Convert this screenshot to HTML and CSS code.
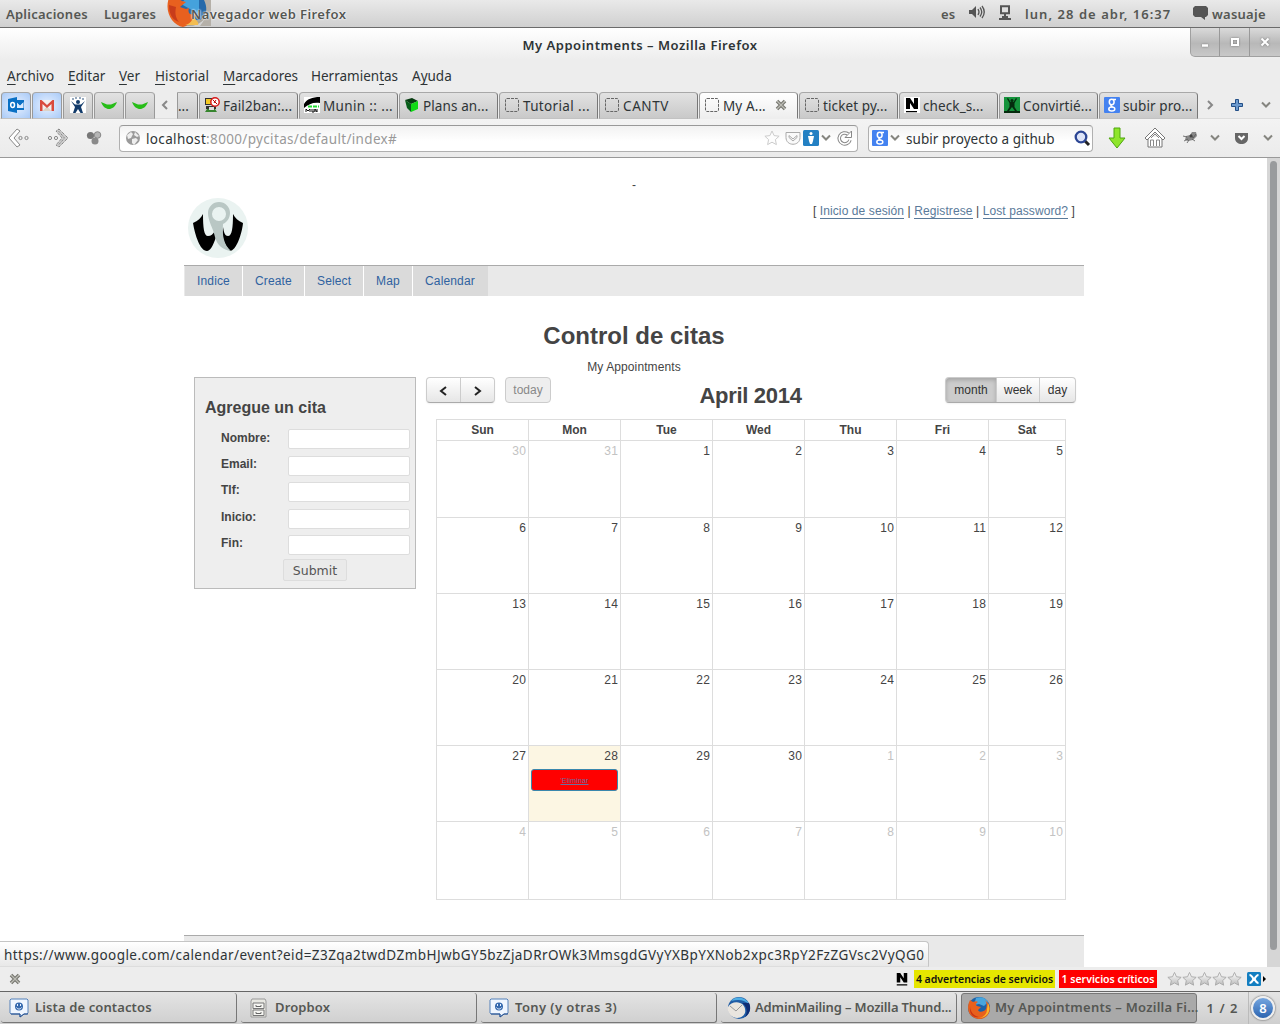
FILE: index.html
```html
<!DOCTYPE html>
<html lang="es">
<head>
<meta charset="utf-8">
<title>My Appointments</title>
<link rel="stylesheet" href="styles.css">
</head>
<body>
<svg width="0" height="0" class="defs">
  <defs>
    <linearGradient id="gy" x1="0" y1="0" x2="0" y2="1"><stop offset="0" stop-color="#fff"/><stop offset="1" stop-color="#bbb"/></linearGradient>
    <symbol id="fox" viewBox="0 0 24 24">
      <circle cx="12" cy="12" r="11" fill="#1c62a8"/><path d="M9 2c5-2 10 0 12 4l-4 4-5-2-5 1z" fill="#48a5dd"/>
      <path d="M3 4l3 2c2-1 4-1 5 0-2 1-3 3-1 4l4 1-3 3c1 3 6 2 8-1 1-3 1-6-1-9 5 4 6 9 4 13-3 6-10 8-16 4C0 17 0 10 3 4z" fill="#e8601c"/>
      <path d="M21 7c4 8-1 15-9 15 5-1 8-4 8-9z" fill="#f9b62c"/><path d="M3 10c0 6 4 10 9 11-6 1-10-3-9-11z" fill="#c93312"/>
    </symbol>
    <symbol id="blank" viewBox="0 0 16 16"><rect x="1.5" y="1.5" width="13" height="13" rx="1.5" fill="none" stroke="#666" stroke-dasharray="3 1"/></symbol>
    <symbol id="goog" viewBox="0 0 16 16"><rect width="16" height="16" rx="1" fill="#4482f0"/><g fill="none" stroke="#fff" stroke-width="1.5"><ellipse cx="7.7" cy="5" rx="2.4" ry="2.7"/><path d="M9 2.6h3M8 7.7c-2 1-1 1.700.6 2.400"/><ellipse cx="7.8" cy="12" rx="3" ry="2"/></g></symbol>
    <symbol id="nag" viewBox="0 0 16 16"><rect width="16" height="16" fill="#fff"/><path d="M2 12V1h4l4 6V1h4v11h-4L6 6v6zM2 14h11v1.3H2z" fill="#000"/></symbol>
    <symbol id="down" viewBox="0 0 10 8"><path d="M1 1.500l4 4 4-4" fill="none" stroke="#85857f" stroke-width="2"/></symbol>
    <symbol id="chat" viewBox="0 0 20 20"><path d="M2 1h16l1 1v13l-1 1h-3l-4 3v-3H2l-1-1V2z" fill="#eff6ff" stroke="#5581ba"/><path d="M2 16h9v3l4-3h4" fill="none" stroke="#254f8e"/><circle cx="10" cy="8.500" r="4" fill="#3569ae"/><path d="M8.500 6v2M11.500 6v2M7.500 9.500c1 2 4 2 5 0" stroke="#e8f2ff" fill="none"/></symbol>
    <symbol id="close" viewBox="0 0 12 12"><path d="M2 2l8 8M10 2l-8 8" stroke="#777770" stroke-width="3.600"/><path d="M2 2l8 8M10 2l-8 8" stroke="#bdbdb6" stroke-width="1.200"/></symbol>
    <symbol id="vee" viewBox="0 0 16 16"><path d="M0 5l6 2.500h4L16 5c-2 5-5 7-8 7S2 10 0 5z" fill="#27bd18"/></symbol>
    <symbol id="star" viewBox="0 0 16 16"><path d="M8 1l2.100 4.600 5 .6-3.700 3.400 1 5L8 12.200l-4.400 2.400 1-5L.9 6.200l5-.6z" fill="url(#gy)" stroke="#aaa"/></symbol>
    <symbol id="ustar" viewBox="0 0 16 16"><path d="M8 1l2.100 4.600 5 .6-3.700 3.400 1 5L8 12.200l-4.400 2.400 1-5L.9 6.200l5-.6z" fill="#fdfdfd" stroke="#ccc"/></symbol>
  </defs>
</svg>
<div class="desktop">
  <header class="panel">
    <span class="p-app">Aplicaciones</span><span class="p-lug">Lugares</span>
    <svg class="p-fox" viewBox="0 0 44 27"><circle cx="22" cy="5" r="21" fill="#aaa59b"/><path d="M8-8h25c9 8 9 22 0 28H15z" fill="#2469aa"/><path d="M14 4c5-8 12-8 18-4v14z" fill="#45a2dc"/><path d="M36-2c5 9 5 19-3 28h11V-2z" fill="#b5b0a8"/><path d="M2-2c6 1 9 0 13 3l4 1-6 5 6 2 3-1c-2 6 2 8 7 5-2 8-6 12-13 14C5 25-3 11 2-2z" fill="#e8601f"/><path d="M2 5c0 10 4 15 10 17-4-5-4-10-3-15z" fill="#c83c1b"/><path d="M18 25c5-1 8-5 9-10 0 5 6 7 4 10z" fill="#f3bd51"/></svg>
    <span class="p-title">Navegador web Firefox</span>
    <span class="p-es">es</span>
    <svg class="p-vol" viewBox="0 0 16 14"><path d="M0 5h3l4-4v12L3 9H0z" fill="#555"/><path d="M9 4q2 3 0 6M11 2.500q3.500 4.500 0 9M13 1q4.500 6 0 12" stroke="#555" stroke-width="1.300" fill="none"/></svg>
    <svg class="p-net" viewBox="0 0 12 16"><path d="M2 1.200h8v7H2zM6 8v5M0 14h12" stroke="#555" stroke-width="2" fill="none"/><path d="M3 12h6" stroke="#555" stroke-width="2"/></svg>
    <span class="p-date">lun, 28 de abr, 16:37</span>
    <svg class="p-chat" viewBox="0 0 15 14"><path d="M2 0h11l2 2v7l-2 2h-1v3L8 11H2L0 9V2z" fill="#555"/></svg>
    <span class="p-user">wasuaje</span>
  </header>
  <section class="chrome">
    <div class="titlebar"><span class="title">My Appointments – Mozilla Firefox</span>
      <div class="winbtns"><i><svg viewBox="0 0 14 14"><path d="M4 10.500h6" stroke="#fff" stroke-width="2.500"/></svg></i><i><svg viewBox="0 0 14 14"><path d="M4 4h6v6H4z" fill="none" stroke="#fff" stroke-width="2"/></svg></i><i><svg viewBox="0 0 14 14"><path d="M3.500 3.500l7 7M10.500 3.500l-7 7" stroke="#fff" stroke-width="2"/></svg></i></div>
    </div>
    <nav class="menubar"><span class="m1"><u>A</u>rchivo</span><span class="m2"><u>E</u>ditar</span><span class="m3"><u>V</u>er</span><span class="m4"><u>H</u>istorial</span><span class="m5"><u>M</u>arcadores</span><span class="m6">Herramien<u>t</u>as</span><span class="m7">A<u>y</u>uda</span></nav>
    <div class="tabs">
      <div class="pin lit"><svg viewBox="0 0 16 16"><path d="M7 3h9v10H7z" fill="#0a70c4"/><path d="M9 5.500l3 3 3.500-3.500v6H9z" fill="#d9eaff"/><path d="M9.500 5l2.500 2.500L15.500 4" fill="none" stroke="#0a70c4"/><path d="M0 2l9-2v16l-9-2z" fill="#0a70c4"/><ellipse cx="4.600" cy="8" rx="1.900" ry="2.500" fill="none" stroke="#fff" stroke-width="1.500"/></svg></div>
      <div class="pin lit"><svg viewBox="0 0 16 16"><path d="M1 3h14v11H1z" fill="#f3eeee"/><path d="M3.500 14L8 9.500l4.500 4.500z" fill="#ddd3c6"/><path d="M1 14V3h1.500L8 8l5.500-5H15v11h-2.500V7L8 11 3.500 7v7z" fill="#d94a3d"/></svg></div>
      <div class="pin"><svg viewBox="0 0 16 16"><path d="M0 0h16v16H0z" fill="#fff"/><g fill="#123b6b"><circle cx="8" cy="5" r="2"/><circle cx="3" cy="2" r=".8"/><circle cx="6" cy="1" r=".8"/><circle cx="10" cy="1" r=".8"/><circle cx="13" cy="2" r=".8"/><path d="M1 4l4 3.500h6L15 4l-4 6 2 6h-2.500L8 12l-2.500 4H3l2-6z"/></g></svg></div>
      <div class="pin"><svg><use href="#vee"/></svg></div><div class="pin"><svg><use href="#vee"/></svg></div>
      <svg class="scr-l" viewBox="0 0 10 12"><path d="M7 2L3 6l4 4" fill="none" stroke="#888" stroke-width="2"/></svg>
      <div class="tab part">...</div>
      <div class="tab"><svg viewBox="0 0 16 16"><path d="M1 1h8v7H1zM2 9h10v3H2z" fill="#333"/><path d="M2 2h6v5H2z" fill="#f5ca25"/><path d="M3 12h8l2 3H1z" fill="#36852e"/><path d="M5 10h5v3H5z" fill="#ddd"/><circle cx="11" cy="5" r="4.200" fill="#fff" stroke="#d91b1b" stroke-width="1.500"/><path d="M9 3l4 4M10 6l2-3" stroke="#b00"/></svg><span class="t1">Fail2ban:...</span></div>
      <div class="tab"><svg viewBox="0 0 16 16"><path d="M0 0h16v16H0z" fill="#fff"/><path d="M0 7C3 2 8 0 16 0v6C9 5 5 7 0 11z" fill="#000"/><path d="M4 9.500h11" stroke="#22dc32" stroke-width="2" stroke-dasharray="4 1"/><path d="M2 15v-3l2 2 2-2v3m2-3v3h2v-3m1 3v-3l2 3v-3" stroke="#111" fill="none"/></svg><span class="t2">Munin :: ...</span></div>
      <div class="tab"><svg viewBox="0 0 16 16"><path d="M1 3l7-2 6 3-7 3z" fill="#063b10"/><path d="M1 3l6 4v8l-4-4z" fill="#075d19"/><path d="M7 7l7-3v8l-7 3z" fill="#10da16"/></svg><span class="t3">Plans an...</span></div>
      <div class="tab"><svg><use href="#blank"/></svg><span class="t4">Tutorial ...</span></div>
      <div class="tab"><svg><use href="#blank"/></svg><span class="t5">CANTV</span></div>
      <div class="tab active"><svg><use href="#blank"/></svg><span class="t6">My A...</span><svg class="x"><use href="#close"/></svg></div>
      <div class="tab"><svg><use href="#blank"/></svg><span class="t7">ticket py...</span></div>
      <div class="tab"><svg><use href="#nag"/></svg><span class="t8">check_s...</span></div>
      <div class="tab"><svg viewBox="0 0 16 16"><path d="M0 0h16v16H0z" fill="#15933c"/><path d="M4 1l2.500 4h3L12 1l1 .7L10.500 6v4l2.500 4h-2l-3-4-3 4H3l2.500-4V6L3 1.700zM0 14h16v2H0z" fill="#052b0e"/><circle cx="8" cy="3.500" r="1.500" fill="#052b0e"/></svg><span class="t9">Convirtié...</span></div>
      <div class="tab"><svg><use href="#goog"/></svg><span class="t10">subir pro...</span></div>
      <svg class="scr-r" viewBox="0 0 10 12"><path d="M3 2l4 4-4 4" fill="none" stroke="#888" stroke-width="2"/></svg>
      <svg class="plus" viewBox="0 0 12 12"><path d="M4.500.5h3v4h4v3h-4v4h-3v-4h-4v-3h4z" fill="#6d9bcf" stroke="#234f87"/></svg>
      <svg class="tdown"><use href="#down"/></svg>
    </div>
    <div class="toolbar">
      <svg class="back" viewBox="0 0 22 20"><path d="M9 1l3 2-6 7 6 7-3 2-8-9z" fill="#fff" stroke="#888"/><circle cx="12.500" cy="10" r="1.600" fill="none" stroke="#888"/><circle cx="18.500" cy="10" r="1.600" fill="none" stroke="#888"/></svg>
      <svg class="fwd" viewBox="0 0 22 20"><path d="M12 1l-3 2 6 7-6 7 3 2 9-9z" fill="#ccc" stroke="#666" stroke-dasharray="1 1"/><path d="M11.500 3l6 7-6 7" fill="none" stroke="#777" stroke-dasharray="1 1"/><circle cx="3" cy="10" r="1.600" fill="none" stroke="#888"/><circle cx="9" cy="10" r="1.600" fill="none" stroke="#888"/></svg>
      <svg class="balls" viewBox="0 0 16 16"><circle cx="4.500" cy="5.500" r="3.600" fill="#777"/><circle cx="11.500" cy="5" r="3.300" fill="#b5b5b5" stroke="#888"/><circle cx="9" cy="11" r="3.500" fill="#8a8a8a"/></svg>
      <div class="url"><svg class="globe" viewBox="0 0 16 16"><circle cx="8" cy="8" r="7" fill="#9a9a9a"/><path d="M2 5l4-3 2 2-2 4-3 1zM10 2l4 4-2 1-3-2zM7 9l4-1 2 2-4 5-2-2z" fill="#eee"/></svg><span class="addr"><b>localhost</b>:8000/pycitas/default/index#</span>
        <svg class="i16"><use href="#ustar"/></svg>
        <svg class="i16 u2" viewBox="0 0 16 16"><path d="M1 2.500h14v5c0 9-14 9-14 0z" fill="#fafafa" stroke="#aaa"/><path d="M4 5.500l4 3.500 4-3.500v2L8 11 4 7.500z" fill="none" stroke="#aaa"/></svg>
        <svg class="i16 u3" viewBox="0 0 16 16"><rect width="16" height="16" rx="1.500" fill="#2380c3"/><circle cx="8" cy="3.500" r="1.500" fill="#fff"/><path d="M5 6h6l-1 5-1 3H7L6 11z" fill="#fff"/></svg>
        <svg class="udown"><use href="#down"/></svg>
        <svg class="i16 u4" viewBox="0 0 16 16"><path d="M13 10a5.500 5.500 0 1 1-2-6" fill="none" stroke="#888" stroke-width="3.500"/><path d="M14.500 1v6.500H8z" fill="#fff" stroke="#888"/><path d="M13 10a5.500 5.500 0 1 1-2-6" fill="none" stroke="#fff" stroke-width="1.500"/></svg>
      </div>
      <div class="search"><svg class="i16"><use href="#goog"/></svg><svg class="sdown"><use href="#down"/></svg><span class="q">subir proyecto a github</span><svg class="mag" viewBox="0 0 16 16"><path d="M10 10l5 5" stroke="#222" stroke-width="3"/><circle cx="7" cy="7" r="5.300" fill="#dde4f8" stroke="#2c4694" stroke-width="2.300"/></svg></div>
      <svg class="arrow" viewBox="0 0 18 22"><path d="M6 1h6v10h5l-8 10-8-10h5z" fill="#8fe52b" stroke="#4ea60e"/></svg>
      <svg class="home" viewBox="0 0 22 22"><path d="M4 10v10h14V10" fill="#fff" stroke="#777"/><path d="M1 11L11 1l10 10-2 2-8-8-8 8z" fill="#fff" stroke="#777"/><path d="M6.500 19v-6h3v6m3 0v-6h3v6M7 11l4-4 4 4" fill="none" stroke="#888"/></svg>
      <svg class="fly" viewBox="0 0 16 14"><path d="M4 5l4-1 2-3 4 0 1 4-4 4-5 1-3-1z" fill="#888"/><path d="M9 3l2 4 3-4M1 5l4 1M2 10l4-2M5 12l2-3M13 10l-3-2" fill="none" stroke="#555" stroke-width=".8"/><circle cx="9" cy="5" r="1.500" fill="#444"/></svg>
      <svg class="fdown"><use href="#down"/></svg>
      <svg class="pocket" viewBox="0 0 15 13"><path d="M1 1h13v5c0 8-13 8-13 0z" fill="#666"/><path d="M4.500 4l3 3 3-3" fill="none" stroke="#fff" stroke-width="2"/></svg>
      <svg class="pdown"><use href="#down"/></svg>
    </div>
  </section>
  <main class="view">
    <div class="page">
      <div class="flash">-</div>
      <div class="head"><svg class="logo" viewBox="0 0 60 60"><circle cx="30" cy="30" r="30" fill="#eaf3f1"/><path d="M5 25c5-2 8-5 10-9 0 14 1 22 5 22 3 0 5-2 7-5l1 6c-3 9-6 14-9 14C12 53 7 37 5 25zM55 25c-5-2-8-5-10-9 0 14-1 22-5 22-3 0-4-3-5-9-2 12 2 18 7 24 6 0 12-17 13-28z" fill="#000"/><path d="M31 4a11 11 0 0 0-11 11c0 8 5 15 7 24 2 8 8 13 16 14-7-6-9-15-8-27 4-2 7-6 7-11A11 11 0 0 0 31 4zm0 5a7 7 0 1 1 0 14 7 7 0 0 1 0-14z" fill="#b9c7c4" fill-rule="evenodd"/></svg>
        <div class="auth">[ <a>Inicio de sesión</a> | <a>Registrese</a> | <a>Lost password?</a> ]</div></div>
      <nav class="nav"><a class="n1">Indice</a><a class="n2">Create</a><a class="n3">Select</a><a class="n4">Map</a><a class="n5">Calendar</a></nav>
      <h1>Control de citas</h1>
      <p class="sub">My Appointments</p>
      <div class="cols">
        <form class="form"><h3>Agregue un cita</h3>
          <div class="rows"><label>Nombre:</label><input><label>Email:</label><input><label>Tlf:</label><input><label>Inicio:</label><input><label>Fin:</label><input></div>
          <button type="button">Submit</button></form>
        <div class="cal">
          <div class="calhead"><div class="grp"><span class="b1"><svg viewBox="0 0 10 12"><path d="M7 2L2 6l5 4" fill="none" stroke="#222" stroke-width="2"/></svg></span><span class="b2"><svg viewBox="0 0 10 12"><path d="M2 2l5 4-5 4" fill="none" stroke="#222" stroke-width="2"/></svg></span></div><div class="grp off"><span class="b3">today</span></div><h2>April 2014</h2><div class="grp"><span class="b4 on">month</span><span class="b5">week</span><span class="b6">day</span></div></div>
          <div class="grid">
            <b>Sun</b><b>Mon</b><b>Tue</b><b>Wed</b><b>Thu</b><b>Fri</b><b>Sat</b>
            <div class="o">30</div><div class="o">31</div><div>1</div><div>2</div><div>3</div><div>4</div><div>5</div>
            <div>6</div><div>7</div><div>8</div><div>9</div><div>10</div><div>11</div><div>12</div>
            <div>13</div><div>14</div><div>15</div><div>16</div><div>17</div><div>18</div><div>19</div>
            <div>20</div><div>21</div><div>22</div><div>23</div><div>24</div><div>25</div><div>26</div>
            <div>27</div><div class="now">28<a class="ev">'Eliminar</a></div><div>29</div><div>30</div><div class="o">1</div><div class="o">2</div><div class="o">3</div>
            <div class="o">4</div><div class="o">5</div><div class="o">6</div><div class="o">7</div><div class="o">8</div><div class="o">9</div><div class="o">10</div>
          </div>
        </div>
      </div>
      <footer class="foot"></footer>
    </div>
    <div class="scroll"><i></i></div>
    <div class="status"><span>https://www.google.com/calendar/event?eid=Z3Zqa2twdDZmbHJwbGY5bzZjaDRrOWk3MmsgdGVyYXBpYXNob2xpc3RpY2FzZGVsc2VyQG0</span></div>
  </main>
  <div class="addon"><svg class="ax"><use href="#close"/></svg><svg class="an" viewBox="0 0 16 16"><path d="M2 12V1h4l4 6V1h4v11h-4L6 6v6zM2 14h12v1.300H2z"/></svg><span class="warn">4 advertencias de servicios</span><span class="crit">1 servicios críticos</span><div class="stars"><svg><use href="#star"/></svg><svg><use href="#star"/></svg><svg><use href="#star"/></svg><svg><use href="#star"/></svg><svg><use href="#star"/></svg></div><svg class="xm" viewBox="0 0 20 14"><rect width="14" height="14" rx="1.500" fill="#147fc1"/><path d="M2.500 3c2 0 3 2 4 4-1 2-2 4-4 4M11.500 3c-2 0-3 2-4 4 1 2 2 4 4 4" fill="none" stroke="#fff" stroke-width="2"/><path d="M16 4l3 3-3 3z"/></svg></div>
  <footer class="taskbar">
    <div class="task"><svg><use href="#chat"/></svg><span class="k1">Lista de contactos</span></div>
    <div class="task"><svg viewBox="0 0 20 20"><path d="M3 1h13l1 2v16H2V3z" fill="#e8e8e2" stroke="#999"/><path d="M4 5h11v5.500H4zM4 12h11v5.500H4z" fill="#f6f6f2" stroke="#777"/><path d="M7 7v1.500h5V7M7 14v1.500h5V14" fill="none" stroke="#666"/></svg><span class="k2">Dropbox</span></div>
    <div class="task"><svg><use href="#chat"/></svg><span class="k3">Tony (y otras 3)</span></div>
    <div class="task"><svg class="big" viewBox="0 0 24 24"><circle cx="12" cy="12" r="11" fill="#205da5"/><path d="M4 5C9-1 19 1 22 8c-5-4-10-5-18-3z" fill="#4faee5"/><path d="M1 11c2-4 8-6 12-4 4 1 6 6 5 10-2 5-8 6-12 4-4-2-6-6-5-10z" fill="#e9e5df"/><path d="M3 10l6 5 6-6" fill="none" stroke="#999"/><path d="M15 7c5 3 6 9 3 14 6-4 6-10 4-14z" fill="#102d74"/></svg><span class="k4">AdminMailing – Mozilla Thund...</span></div>
    <div class="task cur"><svg class="big"><use href="#fox"/></svg><span class="k5">My Appointments – Mozilla Fi...</span></div>
    <div class="ws"><span>1 / 2</span></div>
    <div class="badge"><span>8</span></div>
  </footer>
</div>
</body>
</html>
```
FILE: styles.css
```css
* { box-sizing: border-box; }
body { margin: 0; background: #fff; color: #2e3436; font: 13.5px/18px "Noto Sans", "Open Sans", sans-serif; white-space: nowrap; }
svg { display: block; flex: none; overflow: visible; }
.defs { position: absolute; }
.desktop { width: 1280px; height: 1024px; overflow: hidden; display: flex; flex-direction: column; }
.panel { height: 28px; flex: none; display: flex; align-items: center; background: linear-gradient(#e9e9e9, #d0d0d0); border-bottom: 1px solid #6b6b6b; font-weight: 600; font-size: 13px; letter-spacing: .25px; color: #555753; overflow: hidden; }
.panel span { flex: none; }
.p-app { margin-left: 6px; width: 98px; }
.p-lug { width: 63px; }
.p-fox { width: 44px; height: 27px; overflow: hidden; }
.p-title { margin-left: -20px; width: 750px; letter-spacing: .4px; text-shadow: 0 0 2px #fff, 0 0 2px #fff; position: relative; }
.p-es { width: 28px; }
.p-vol { width: 16px; height: 14px; margin-right: 14px; margin-top: -3px; }
.p-net { width: 12px; height: 16px; margin-right: 14px; margin-top: -2px; }
.p-date { width: 168px; letter-spacing: 1.05px; }
.p-chat { width: 15px; height: 14px; margin-right: 4px; margin-top: -2px; }
.chrome { height: 130px; flex: none; display: flex; flex-direction: column; background: linear-gradient(#fff, #ededed 32px); border-bottom: 1px solid #999; }
.titlebar { height: 36px; display: flex; justify-content: center; align-items: center; padding-bottom: 2px; font-weight: 600; font-size: 13px; letter-spacing: .52px; position: relative; flex: none; }
.winbtns { position: absolute; right: -1px; top: 0; height: 29px; display: flex; border: 1px solid #a0a0a0; border-top: 0; border-radius: 0 0 0 5px; background: linear-gradient(#dadada, #b8b8b8 55%, #c8c8c8); }
.winbtns i { width: 30px; border-right: 1px solid #999; display: flex; align-items: center; justify-content: center; }
.winbtns i:first-child { width: 29px; }
.winbtns i:last-child { border: 0; }
.winbtns svg { width: 14px; height: 14px; filter: drop-shadow(0 0 1px #777); }
.menubar { height: 28px; flex: none; display: flex; align-items: center; padding: 0 0 4px 7px; }
.menubar span { flex: none; }
.m1 { width: 61px; } .m2 { width: 51px; } .m3 { width: 36px; } .m4 { width: 68px; letter-spacing: .1px; } .m5 { width: 88px; } .m6 { width: 101px; }
.menubar u { text-underline-offset: 3px; }
.tabs { height: 27px; flex: none; display: flex; align-items: center; padding-left: 1px; border-bottom: 1px solid #ddd; }
.pin, .tab { height: 27px; flex: none; display: flex; align-items: center; border: 1px solid #999; border-top: 1px solid #a8a8a8; border-bottom: 1px solid #c2c2c2; border-radius: 4px 4px 0 0; background: linear-gradient(#e2e2e2, #c9c9c9); }
.pin { width: 30px; margin-right: 1px; justify-content: center; }
.pin.lit { background: radial-gradient(#e8f1ff, #a9caf7); }
.pin svg, .tab svg { width: 16px; height: 16px; }
.tab span { padding-top: 2px; letter-spacing: .1px; }
.scr-l { width: 10px; height: 12px; margin: 0 7px 0 4px; }
.tab { width: 99px; margin-right: 1px; padding-left: 4px; gap: 3px; border-right-color: #777; }
.tab.part { width: 21px; padding: 2px 0 0; border-radius: 0 4px 0 0; }
.tab.active { background: linear-gradient(#fff, #eee); border-bottom-color: #eee; }
.tab .t2, .tab .t4 { letter-spacing: .35px; }
.tab .t5 { letter-spacing: .6px; }
.tab .x { width: 12px; height: 12px; margin-left: 6px; }
.scr-r { width: 10px; height: 12px; margin: 0 16px 0 6px; }
.plus { width: 12px; height: 12px; margin-right: 18px; }
.tdown { width: 10px; height: 8px; }
.toolbar { height: 38px; flex: none; display: flex; align-items: center; padding-left: 8px; background: linear-gradient(#f3f3f3, #ebebeb); }
.back { width: 22px; height: 20px; margin-right: 17px; }
.fwd { width: 22px; height: 20px; margin-right: 17px; }
.balls { width: 16px; height: 16px; margin-right: 17px; }
.url, .search { height: 27px; flex: none; border: 1px solid #b0b0b0; border-top: 1px solid #999; border-radius: 4px; background: linear-gradient(#f2f2f2, #fff 60%); display: flex; align-items: center; }
.url { width: 739px; padding-left: 5px; margin-right: 10px; }
.globe { width: 16px; height: 16px; margin-right: 5px; }
.addr { flex: none; width: 618px; padding-top: 2px; letter-spacing: .34px; color: #999; }
.addr b { font-weight: 400; color: #2e3436; }
.i16 { width: 16px; height: 16px; flex: none; }
.u2 { margin-left: 5px; } .u3 { margin-left: 2px; }
.udown { width: 10px; height: 8px; margin: 0 6px 0 2px; }
.search { width: 225px; padding-left: 3px; margin-right: 15px; }
.sdown { width: 10px; height: 8px; margin: 0 6px 0 2px; }
.q { width: 168px; flex: none; padding-top: 2px; letter-spacing: .05px; }
.mag { width: 16px; height: 16px; }
.arrow { width: 18px; height: 22px; margin-right: 18px; }
.home { width: 22px; height: 22px; margin-right: 16px; }
.fly { width: 16px; height: 14px; margin-right: 12px; }
.fdown { width: 10px; height: 8px; margin-right: 14px; }
.pocket { width: 15px; height: 13px; margin-right: 14px; }
.pdown { width: 10px; height: 8px; }
.view { height: 809px; flex: none; position: relative; display: flex; font: 12px/18px "Liberation Sans", Arial, sans-serif; color: #444; overflow: hidden; }
.page { width: 900px; margin-left: 184px; flex: none; display: flex; flex-direction: column; }
.flash { height: 40px; padding-top: 18px; text-align: center; flex: none; }
.head { height: 67px; flex: none; display: flex; justify-content: space-between; padding: 0 9px 0 4px; }
.logo { width: 60px; height: 60px; }
.auth { padding-top: 4px; letter-spacing: .1px; }
.auth a { color: #5a7a9a; border-bottom: 1px solid #5a7a9a; }
.nav { height: 31px; flex: none; border-top: 1px solid #aaa; background: #e9e9e9; display: flex; padding-left: 1px; letter-spacing: .15px; }
.nav a { background: #dadada; color: #2f62a0; border-right: 1px solid #fff; padding: 6px 0 0 12px; height: 30px; flex: none; }
.n1 { width: 58px; } .n2 { width: 62px; } .n3 { width: 59px; } .n4 { width: 49px; }
.nav .n5 { width: 75px; border: 0; }
h1 { margin: 25px 0 0; font-size: 24px; line-height: 30px; height: 30px; text-align: center; }
.sub { margin: 7px 0 1px; text-align: center; letter-spacing: .1px; }
.cols { display: flex; height: 558px; flex: none; padding-left: 10px; align-items: flex-start; }
.form { width: 222px; height: 212px; border: 1px solid #bbb; background: #eee; padding: 20px 0 0 10px; display: flex; flex-direction: column; }
.form h3 { margin: 0; font-size: 16px; line-height: 20px; height: 31px; }
.rows { display: grid; grid-template-columns: 67px 122px; grid-template-rows: 27px 26px 27px 26px 24px; padding-left: 16px; }
.rows label { font-weight: 700; line-height: 16px; }
.rows label:first-child { line-height: 18px; }
.rows input { width: 122px; height: 20px; border: 1px solid #ddd; border-radius: 2px; background: #fff; padding: 0; margin: 0; }
.form button { align-self: flex-start; margin-left: 78px; width: 64px; height: 22px; border: 1px solid #ddd; border-radius: 2px; background: #eaeaea; color: #555; font: 12.5px/20px "DejaVu Sans", sans-serif; padding: 1px 0 0; }
.cal { margin-left: 10px; width: 650px; }
.calhead { display: flex; height: 42px; }
.grp { display: flex; height: 26px; border: 1px solid #ccc; border-bottom-color: #aaa; border-radius: 4px; background: linear-gradient(#fff, #e6e6e6); box-shadow: 0 1px 2px rgba(0,0,0,.06); color: #333; }
.grp span { display: flex; justify-content: center; align-items: center; border-right: 1px solid #ccc; padding-bottom: 1px; }
.grp span:last-child { border: 0; }
.grp svg { width: 10px; height: 12px; margin-top: 2px; }
.grp.off { margin-left: 10px; background: #eee; color: #888; border-color: #ccc; box-shadow: none; }
.b1 { width: 34px; } .b2 { width: 33px; } .b3 { width: 44px; } .b4 { width: 51px; } .b5 { width: 43px; } .b6 { width: 35px; }
.grp .on { background: #ccc; box-shadow: inset 0 2px 4px rgba(0,0,0,.2); border-radius: 3px 0 0 3px; }
h2 { margin: 7px 0 0; padding-left: 5px; flex: 1; text-align: center; font-size: 22px; letter-spacing: -.3px; line-height: 24px; }
.grid { display: grid; margin-left: 10px; width: 630px; grid-template-columns: repeat(6, 92px) 77px; grid-template-rows: 21px 77px repeat(4, 76px) 78px; border: solid #ddd; border-width: 1px 0 0 1px; }
.grid > * { border: solid #ddd; border-width: 0 1px 1px 0; }
.grid b { text-align: center; line-height: 20px; }
.grid div { text-align: right; padding: 1px 2px 0 2px; letter-spacing: .15px; }
.grid .o { color: #c3c3c3; }
.grid .now { background: #fcf6e3; }
.ev { display: block; margin-top: 4px; height: 22px; width: 87px; background: #f00; border: 1px solid #3a87ad; border-radius: 3px; color: #6a70a0; font-size: 7px; line-height: 21px; text-align: center; text-decoration: underline; }
.foot { height: 32px; flex: none; border-top: 1px solid #aaa; background: #e9e9e9; }
.scroll { width: 13px; margin-left: auto; background: #d6d6d6; padding: 3px; }
.scroll i { display: block; width: 7px; height: 789px; border-radius: 4px; background: #999b9d; }
.status { position: absolute; left: 0; bottom: 0; height: 26px; width: 929px; border: 1px solid #c5c5c5; border-left: 0; border-bottom-color: #ddd; border-radius: 0 4px 0 0; background: linear-gradient(#fff, #e8e8e8); color: #2e3436; font: 13.5px/26px "Noto Sans", sans-serif; letter-spacing: .44px; padding-left: 4px; }
.addon { height: 25px; flex: none; border-bottom: 1px solid #666; background: #ededed; display: flex; align-items: center; padding-left: 9px; font-weight: 600; font-size: 10.5px; }
.ax { width: 12px; height: 12px; margin-right: 874px; }
.an { width: 14px; height: 14px; margin-right: 5px; }
.warn, .crit { height: 18px; display: flex; align-items: center; justify-content: center; flex: none; }
.warn { width: 141px; background: #e6e600; color: #111; margin-right: 4px; }
.crit { width: 98px; background: #f00; color: #fff; margin-right: 10px; }
.stars { display: flex; } .stars svg { width: 15px; height: 16px; }
.xm { width: 20px; height: 14px; margin-left: 5px; }
.taskbar { height: 32px; flex: none; background: linear-gradient(#e4e4e4, #cfcfcf); display: flex; font-weight: 600; font-size: 13px; color: #555753; }
.task { width: 236px; height: 30px; margin: 1px 2px 0 2px; flex: none; border: solid #777; border-width: 0 1px 1px 0; border-radius: 3px; display: flex; align-items: center; padding-left: 7px; gap: 6px; }
.task:not(.cur) { margin-left: 1px; margin-right: 3px; padding-left: 8px; }
.task svg { width: 20px; height: 20px; }
.task span { padding-bottom: 2px; letter-spacing: .12px; }
.task .k3 { letter-spacing: .4px; }
.task .k5 { letter-spacing: .25px; }
.task .k4 { letter-spacing: -.15px; }
.task .big { width: 24px; height: 24px; margin: 0 -2px 0 -2px; }
.task.cur { background: #a9a9a9; border: 1px solid #777; margin-left: 1px; padding-left: 7px; margin-right: 0; }
.ws { width: 52px; display: flex; align-items: center; justify-content: center; border-right: 1px solid #bbb; padding-bottom: 1px; letter-spacing: 1px; }
.badge { margin: 4px 0 0 2px; width: 24px; height: 24px; border-radius: 50%; border: 2px solid #eee; box-shadow: 0 0 2px #333; background: linear-gradient(#75a6e0, #2c64b0); color: #fff; display: flex; align-items: center; justify-content: center; flex: none; }
```
